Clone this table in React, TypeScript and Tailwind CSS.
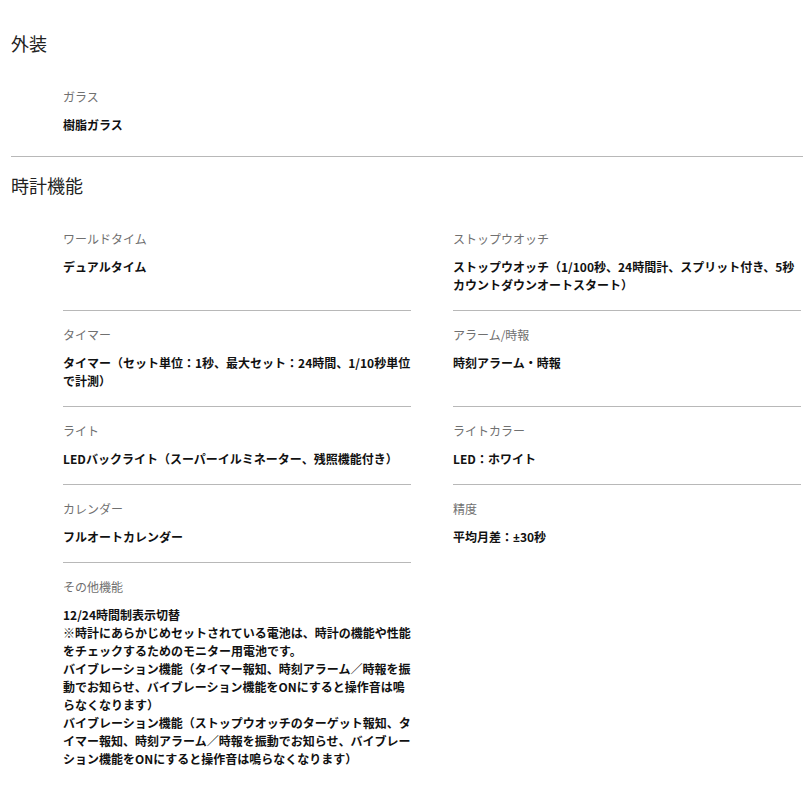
import React from "react";

const font = { fontFamily: '"Noto Sans CJK JP", "Noto Sans", sans-serif' };

type Item = { label: string; value: React.ReactNode[]; border: boolean };

const items: Item[] = [
  { label: "ワールドタイム", value: ["デュアルタイム"], border: true },
  { label: "ストップウオッチ", value: ["ストップウオッチ（1/100秒、24時間計、スプリット付き、5秒カウントダウンオートスタート）"], border: true },
  { label: "タイマー", value: ["タイマー（セット単位：1秒、最大セット：24時間、1/10秒単位で計測）"], border: true },
  { label: "アラーム/時報", value: ["時刻アラーム・時報"], border: true },
  { label: "ライト", value: ["LEDバックライト（スーパーイルミネーター、残照機能付き）"], border: true },
  { label: "ライトカラー", value: ["LED：ホワイト"], border: true },
  { label: "カレンダー", value: ["フルオートカレンダー"], border: true },
  {
    label: "精度",
    value: [
      <>
        平均月差：<span className="font-['Noto_Sans',sans-serif]">±</span>30秒
      </>,
    ],
    border: false,
  },
  {
    label: "その他機能",
    value: [
      "12/24時間制表示切替",
      "※時計にあらかじめセットされている電池は、時計の機能や性能をチェックするためのモニター用電池です。",
      "バイブレーション機能（タイマー報知、時刻アラーム／時報を振動でお知らせ、バイブレーション機能をONにすると操作音は鳴らなくなります）",
      "バイブレーション機能（ストップウオッチのターゲット報知、タイマー報知、時刻アラーム／時報を振動でお知らせ、バイブレーション機能をONにすると操作音は鳴らなくなります）",
    ],
    border: false,
  },
];

function Spec({ item }: { item: Item }) {
  return (
    <div className={`pt-[15px] pb-[16px] ${item.border ? "border-b border-[#b8b8b8]" : ""}`}>
      <div className="text-[12px] leading-[18px] text-[#707070]">{item.label}</div>
      <div className="mt-[10px] text-[12px] leading-[18px] font-bold text-[#111111]">
        {item.value.map((v, i) => (
          <div key={i}>{v}</div>
        ))}
      </div>
    </div>
  );
}

export default function App() {
  return (
    <div className="w-[804px] min-h-[804px] bg-white pl-[11px] pr-[1px] pt-[30px]" style={font}>
      <section className="border-b border-[#b8b8b8] pb-[6px]">
        <h2 className="text-[18px] leading-[27px] font-normal text-[#222222] mb-[16px]">外装</h2>
        <div className="pl-[52px] w-[400px]">
          <Spec item={{ label: "ガラス", value: ["樹脂ガラス"], border: false }} />
        </div>
      </section>
      <section className="pt-[15px]">
        <h2 className="text-[18px] leading-[27px] font-normal text-[#222222] mb-[16px]">時計機能</h2>
        <div className="pl-[52px] grid grid-cols-[348px_348px] gap-x-[42px]">
          {items.map((it, i) => (
            <Spec key={i} item={it} />
          ))}
        </div>
      </section>
    </div>
  );
}
